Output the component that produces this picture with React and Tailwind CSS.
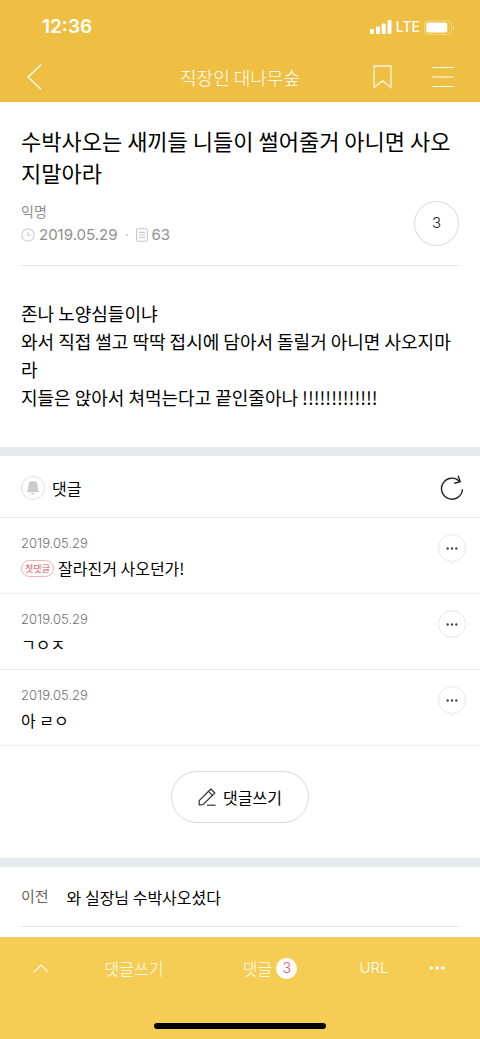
import React from 'react';

const post = {
  title: '수박사오는 새끼들 니들이 썰어줄거 아니면 사오지말아라',
  author: '익명',
  date: '2019.05.29',
  views: 63,
  likes: 3,
  body: [
    '존나 노양심들이냐',
    '와서 직접 썰고 딱딱 접시에 담아서 돌릴거 아니면 사오지마라',
    '지들은 앉아서 쳐먹는다고 끝인줄아나 !!!!!!!!!!!!!',
  ],
};

const comments = [
  { id: 1, date: '2019.05.29', text: '잘라진거 사오던가!', first: true },
  { id: 2, date: '2019.05.29', text: 'ㄱㅇㅈ' },
  { id: 3, date: '2019.05.29', text: '아 ㄹㅇ' },
];

const Dots = ({ className, r }) => (
  <svg className={className} viewBox="0 0 16 4" fill="currentColor">
    <circle cx="2.2" cy="2" r={r} />
    <circle cx="8" cy="2" r={r} />
    <circle cx="13.8" cy="2" r={r} />
  </svg>
);

const StatusBar = () => (
  <div className="flex h-[52px] items-center justify-between pt-[2px] pr-[25px] pl-[42px] text-white">
    <span className="font-['Inter'] text-[19px] font-semibold">12:36</span>
    <div className="flex items-center gap-1">
      <svg className="h-[14px] w-[22px]" viewBox="0 0 22 14" fill="currentColor">
        <rect x="0" y="9" width="4" height="5" rx="1" />
        <rect x="6" y="6.5" width="4" height="7.5" rx="1" />
        <rect x="11.7" y="3.5" width="4" height="10.5" rx="1" />
        <rect x="17.5" y="0" width="4" height="14" rx="1" />
      </svg>
      <span className="font-['Inter'] text-sm font-medium">LTE</span>
      <svg className="h-[15px] w-[31px]" viewBox="0 0 31 15">
        <rect x="0.6" y="0.6" width="26.8" height="13.8" rx="4" fill="none" stroke="#fff" strokeOpacity="0.3" strokeWidth="1.2" />
        <rect x="2.3" y="2.5" width="21" height="10" rx="2" fill="#fff" />
        <path d="M29 5.2c1.3.6 1.3 4 0 4.6z" fill="#fff" fillOpacity="0.5" />
      </svg>
    </div>
  </div>
);

const Header = () => (
  <header className="bg-[#eebf43]">
    <StatusBar />
    <div className="grid h-[50px] grid-cols-[1fr_auto_1fr] items-center px-[26px] text-white">
      <button aria-label="뒤로" className="w-4">
        <svg className="h-[26px] w-4" viewBox="0 0 16 26" fill="none" stroke="currentColor" strokeWidth="1.3">
          <path d="M15 0.7L2 13L15 25.3" />
        </svg>
      </button>
      <h1 className="text-lg font-light">직장인 대나무숲</h1>
      <div className="flex items-center justify-end gap-10">
        <button aria-label="북마크">
          <svg className="h-6 w-[19px]" viewBox="0 0 19 24" fill="none" stroke="currentColor" strokeOpacity="0.85" strokeWidth="1.3">
            <path d="M1 1h17v21.5l-8.500-6.600L1 22.500z" />
          </svg>
        </button>
        <button aria-label="메뉴">
          <svg className="h-6 w-[22px]" viewBox="0 0 22 24" stroke="currentColor" strokeWidth="1.2">
            <path d="M0.5 2.5h21M0.5 12h21M0.5 21.5h21" />
          </svg>
        </button>
      </div>
    </div>
  </header>
);

const Post = () => (
  <article className="px-[21px] pt-[22px] pb-9">
    <h2 className="text-[22px] leading-8 break-all">{post.title}</h2>
    <div className="mt-[11px] flex items-center justify-between border-b border-[#e6e6e6] pb-[18px]">
      <div className="text-[#8f8f8f]">
        <p className="text-sm leading-6">{post.author}</p>
        <div className="flex items-center font-['Inter'] text-[15px] leading-6">
          <svg className="mr-1 h-[14px] w-[14px]" viewBox="0 0 14 14" fill="none" stroke="#d2d2d2" strokeWidth="1.2">
            <circle cx="7" cy="7" r="6.2" />
            <path d="M7 3.2V7.3H10" />
          </svg>
          <time>{post.date}</time>
          <span className="mx-2 h-[2px] w-[2px] rounded-full bg-[#c8c8c8]" />
          <svg className="mr-1 h-[14px] w-3" viewBox="0 0 12 14" fill="none" stroke="#c8c8c8" strokeWidth="1.1">
            <rect x="0.6" y="0.8" width="10.8" height="12.4" rx="1.6" />
            <path d="M3 4.4h6M3 7h6M3 9.6h6" />
          </svg>
          <span>{post.views}</span>
        </div>
      </div>
      <button aria-label="공감" className="h-[45px] w-[45px] rounded-full border border-[#d9d9d9] font-['Inter'] text-[15px] font-light text-[#222]">
        {post.likes}
      </button>
    </div>
    <div className="mt-[33px] text-lg leading-7 break-all">
      {post.body.map((line) => (
        <p key={line}>{line}</p>
      ))}
    </div>
  </article>
);

const Comment = ({ comment }) => (
  <li className="flex items-start justify-between border-b border-[#ededed] pt-[13px] pr-[14px] pb-3 pl-[21px]">
    <div>
      <time className="block font-['Inter'] text-[13px] leading-6 font-light text-[#707070]">{comment.date}</time>
      <div className="flex h-[26px] items-center gap-1">
        {comment.first && (
          <span className="flex h-[17px] w-[33px] items-center justify-center rounded-full border border-[#f2b3b6] text-[9px] leading-none text-[#dd5a60]">
            첫댓글
          </span>
        )}
        <p className="text-base">{comment.text}</p>
      </div>
    </div>
    <button aria-label="더보기" className="mt-[3px] flex h-7 w-7 items-center justify-center rounded-full border border-[#e8e8e8] text-[#444]">
      <Dots className="h-[3px] w-3" r={1.6} />
    </button>
  </li>
);

const Comments = () => (
  <section className="border-t-[9px] border-[#e8e9ed]">
    <div className="flex h-[62px] items-center justify-between border-b border-[#ededed] pt-[2px] pr-4 pl-[21px]">
      <div className="flex items-center gap-[7px]">
        <button aria-label="알림" className="flex h-6 w-6 items-center justify-center rounded-full border border-[#e2e2e2]">
          <svg className="h-[14px] w-3" viewBox="0 0 12 14" fill="#cbcbcb">
            <path d="M6 0C3 0 1.3 2 1.3 4.6v3.2C1.3 9 .6 9.6 0 10.2v.8h12v-.8c-.6-.6-1.3-1.2-1.3-2.4V4.6C10.700 2 9 0 6 0zM4 12h4c-.3 1.100-1 1.600-2 1.600S4.300 13.100 4 12z" />
          </svg>
        </button>
        <h3 className="text-base">댓글</h3>
      </div>
      <button aria-label="새로고침">
        <svg className="h-[26px] w-6" viewBox="0 0 24 26" fill="none" stroke="#222" strokeWidth="1.4">
          <path d="M22.500 14.300A10.500 10.500 0 1 1 19.600 6.400" />
          <path d="M18.200 0.800L20.200 6.700L14.300 8.300" />
        </svg>
      </button>
    </div>
    <ul>
      {comments.map((c) => (
        <Comment key={c.id} comment={c} />
      ))}
    </ul>
    <div className="flex justify-center pt-[25px] pb-[35px]">
      <button className="flex h-[52px] items-center gap-[7px] rounded-full border border-[#d9d9d9] px-[26px] text-base">
        <svg className="h-[18px] w-[18px]" viewBox="0 0 18 18" fill="none" stroke="#333" strokeWidth="1.2" strokeLinejoin="round">
          <path d="M1.200 12.700L12.800 1L16.800 5L5 16.600L1.200 16.900z" />
          <path d="M10.500 3.300L14.500 7.300" />
          <path d="M9 17.200h8.500" />
        </svg>
        댓글쓰기
      </button>
    </div>
  </section>
);

const BottomBar = () => (
  <nav className="sticky bottom-0 bg-[#f6cd54] text-base font-light text-white">
    <div className="grid h-[62px] grid-cols-[82fr_104fr_168fr_40fr_86fr] place-items-center">
      <button aria-label="맨 위로">
        <svg className="h-[9px] w-4" viewBox="0 0 16 9" fill="none" stroke="currentColor" strokeWidth="1.100">
          <path d="M0.600 8.400L8 1L15.400 8.400" />
        </svg>
      </button>
      <button>댓글쓰기</button>
      <button className="flex items-center gap-1">
        댓글
        <span className="flex h-[21px] w-[21px] items-center justify-center rounded-full bg-white font-['Inter'] text-sm text-[#e0565c]">
          {comments.length}
        </span>
      </button>
      <button className="font-['Inter'] text-[15px]">URL</button>
      <button aria-label="더보기">
        <Dots className="h-1 w-4" r={1.7} />
      </button>
    </div>
    <div className="flex h-[40px] items-end justify-center pb-[10px]">
      <div className="h-[6px] w-[172px] rounded-full bg-black" />
    </div>
  </nav>
);

const App = () => {
  return (
    <div className="flex min-h-screen flex-col bg-white font-['Noto_Sans_CJK_KR',sans-serif] text-black">
      <Header />
      <main className="flex-1">
        <Post />
        <Comments />
        {/* previous post */}
        <section className="border-t-[9px] border-[#e8e9ed] px-[21px] pb-[10px]">
          <a href="#prev" className="flex h-[60px] items-center gap-[18px] border-b border-[#e6e6e6] text-base">
            <span className="text-[15px] text-[#666]">이전</span>
            <span>와 실장님 수박사오셨다</span>
          </a>
        </section>
      </main>
      <BottomBar />
    </div>
  );
};

export default App;
